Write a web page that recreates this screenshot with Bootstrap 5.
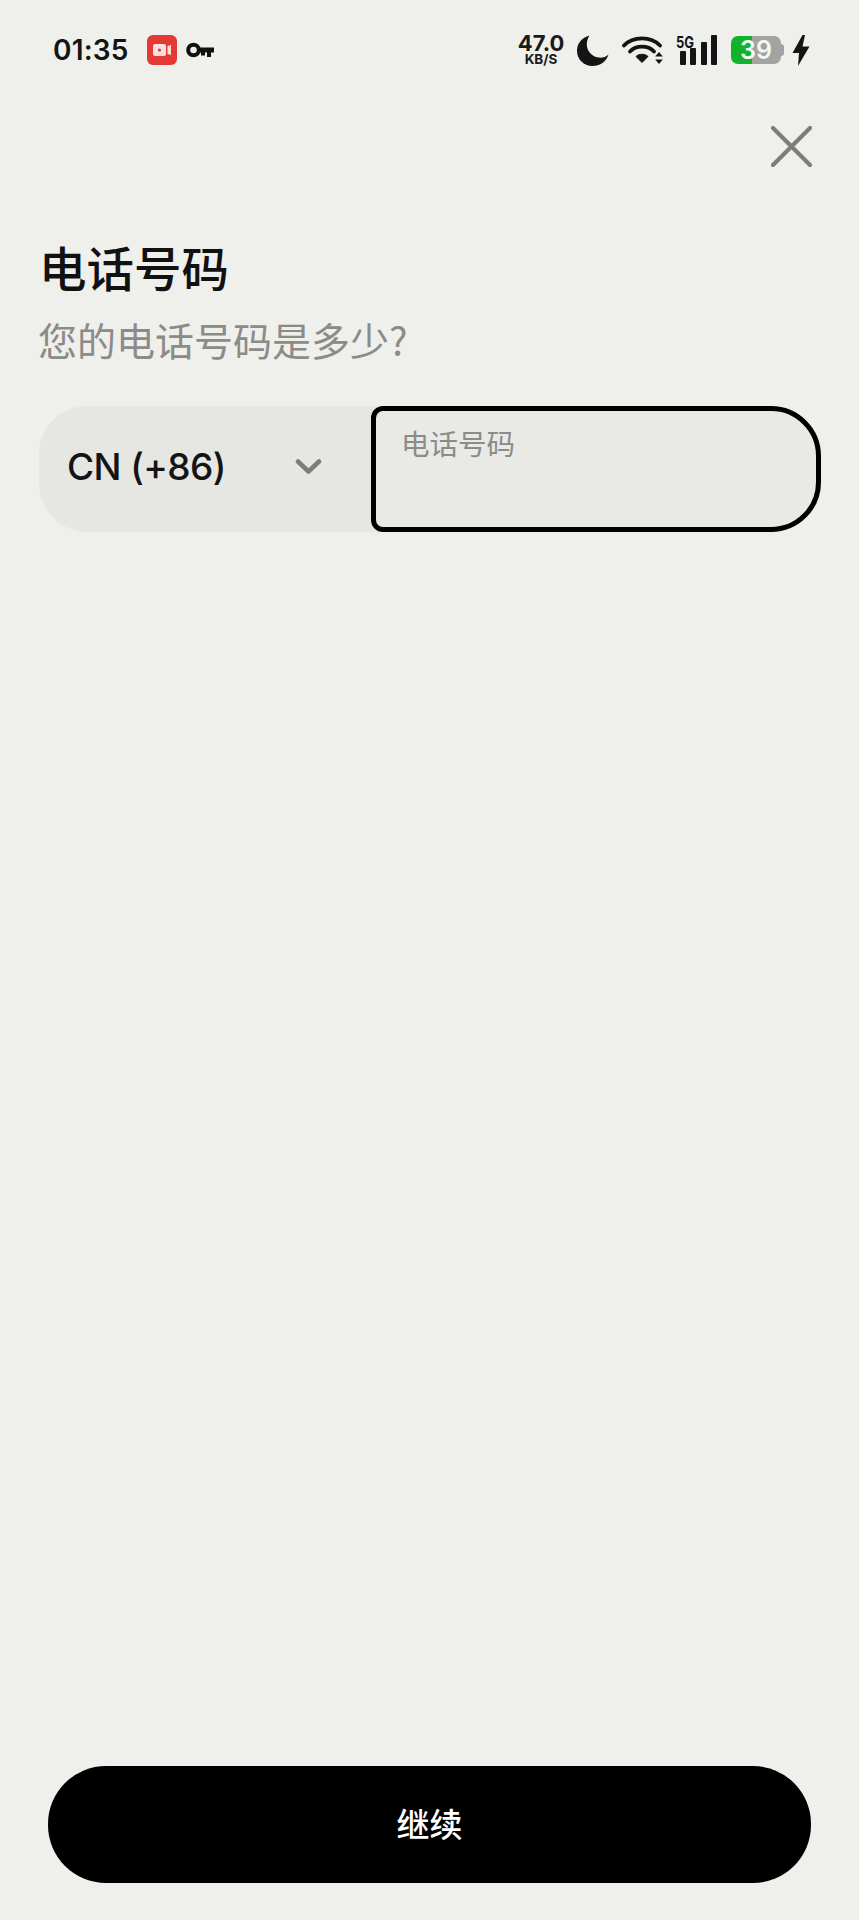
<!DOCTYPE html>
<html lang="zh-CN">
<head>
    <meta charset="UTF-8">
    <title>电话号码</title>
    <link href="https://cdn.jsdelivr.net/npm/bootstrap@5.3.0/dist/css/bootstrap.min.css" rel="stylesheet">
    <style>
        html, body { height: 1920px; }
        body { background: #efefec; color: #141414; font-family: "Noto Sans CJK SC", "Liberation Sans", sans-serif; overflow: hidden; }
        .page-shell { height: 1920px; }

        .status-row { height: 50px; margin-top: 25px; padding: 0 49px 0 53px; }
        .status-time { font: 600 28px/1 Inter, "Liberation Sans", sans-serif; width: 74px; margin-right: 20px; white-space: nowrap; letter-spacing: .2px; }
        .key-icon { margin-left: 9px; }
        .speed-box { width: 54px; margin-right: 9px; font-family: Inter, "Liberation Sans", sans-serif; font-weight: 700; text-align: center; color: #1a1a1a; white-space: nowrap; }
        .speed-top { font-size: 22px; line-height: 18px; }
        .speed-unit { font-size: 13.5px; line-height: 14px; }
        .wifi-icon { margin-left: 13px; }
        .bars-icon { margin: -6px 0 0 12px; }
        .batt-wrap { margin-left: 13px; }
        .batt-body { width: 50px; height: 28px; border-radius: 7px; background: linear-gradient(90deg, #10b32a 0, #10b32a 42%, #a3a3a1 42%); color: #f4f7f2; font: 600 25px/28px Inter, "Liberation Sans", sans-serif; text-align: center; }
        .batt-tip { width: 3px; height: 12px; background: #a3a3a1; border-radius: 0 3px 3px 0; }

        .close-row { padding-right: 47px; margin-top: 51px; }
        .title-text { font-size: 47.5px; font-weight: 500; line-height: 56px; margin: 72px 0 0 39px; color: #111; }
        .sub-text { font-size: 39px; font-weight: 400; line-height: 50px; margin: 19px 0 0 38px; color: #8b8b88; }

        .phone-row { margin: 42px 38px 0 39px; height: 126px; }
        .code-picker { width: 340px; background: #e6e6e3; border-radius: 48px 0 0 48px; padding: 0 57px 5px 28px; font: 500 37px/1 Inter, "Liberation Sans", sans-serif; letter-spacing: -.6px; color: #141414; }
        .phone-field { margin-left: -8px; }
        .phone-field .phone-input { height: 126px; min-height: 126px; background: #e9e9e6; border: 5px solid #000; border-radius: 12px 50px 50px 12px; box-shadow: none; }
        .phone-field label { padding: 19px 0 0 29px; color: #8b8b88; font-size: 28.5px; line-height: 34px; font-weight: 400; }

        .next-wrap { padding: 0 48px 37px 48px; }
        .next-btn { height: 117px; padding: 0 0 3px; background: #000; color: #fff; border: 0; border-radius: 58px; font-size: 33px; line-height: 1; font-weight: 500; }
        .next-btn:hover { background: #000; color: #fff; }
    </style>
</head>
<body>
    <div class="page-shell d-flex flex-column">
        <!-- Status bar -->
        <div class="status-row d-flex align-items-center flex-shrink-0">
            <span class="status-time">01:35</span>
            <svg width="30" height="30" viewBox="0 0 30 30" class="flex-shrink-0">
                <rect width="30" height="30" rx="6" fill="#e53935"/>
                <rect x="6" y="9" width="13" height="12" rx="2" fill="#f9dfdd"/>
                <circle cx="12.5" cy="15" r="1.6" fill="#c93a3a"/>
                <path d="M20.5 11l3.5-1v10l-3.5-1z" fill="#f9dfdd"/>
            </svg>
            <svg width="28" height="16" viewBox="0 0 28 16" class="key-icon flex-shrink-0">
                <circle cx="7.5" cy="8" r="5.3" fill="none" stroke="#111" stroke-width="4"/>
                <path d="M12 5.5h16v5h-3v4.500h-4v-4.500h-2v3h-4v-3h-3z" fill="#111"/>
            </svg>
            <div class="ms-auto d-flex align-items-center">
                <div class="speed-box">
                    <div class="speed-top">47.0</div>
                    <div class="speed-unit">KB/S</div>
                </div>
                <svg width="32" height="31" viewBox="0 0 32 31" class="flex-shrink-0">
                    <path d="M12.500 0.500C4.800 2.500 0 8.500 0 15.800 0 24.500 6.800 31 15.400 31 23 31 29.500 26.500 31.500 19.500 28.500 22.200 25 23 21.500 22.500 14.500 21.500 9.800 15.800 9.800 9.500 9.800 6.200 10.800 3.200 12.500 0.500z" fill="#141414"/>
                </svg>
                <svg width="42" height="30" viewBox="0 0 42 30" class="wifi-icon flex-shrink-0">
                    <g fill="none" stroke="#141414" stroke-width="3.800" stroke-linecap="round">
                        <path d="M2 10.500C11 1 29 1 38 10.500"/>
                        <path d="M8 16.500C14 10 26 10 32 16.500"/>
                    </g>
                    <path d="M14 21.500C17 18.500 23 18.500 26 21.500L20 27.500z" fill="#141414" stroke="#141414" stroke-linejoin="round"/>
                    <path d="M37 17l3.800 4.500h-7.600zM37 29l3.800-4.500h-7.600z" fill="#141414"/>
                </svg>
                <svg width="42" height="36" viewBox="0 -6 42 36" class="bars-icon flex-shrink-0">
                    <text x="0" y="13" font-family="Inter, Liberation Sans, sans-serif" font-size="16" font-weight="700" fill="#141414" textLength="18" lengthAdjust="spacingAndGlyphs">5G</text>
                    <rect x="4" y="16" width="6" height="14" rx="1" fill="#141414"/>
                    <rect x="14" y="13" width="6" height="17" rx="1" fill="#141414"/>
                    <rect x="25" y="7" width="6" height="23" rx="1" fill="#141414"/>
                    <rect x="35" y="0" width="6" height="30" rx="1" fill="#141414"/>
                </svg>
                <div class="batt-wrap d-flex align-items-center flex-shrink-0">
                    <div class="batt-body">39</div>
                    <div class="batt-tip"></div>
                </div>
                <svg width="18" height="31" viewBox="0 0 18 31" class="ms-2 flex-shrink-0">
                    <path d="M10.500 0L0.500 18H7L6 31 17.500 11.500H10.500L13 0z" fill="#141414"/>
                </svg>
            </div>
        </div>

        <!-- Close -->
        <div class="close-row d-flex justify-content-end flex-shrink-0">
            <svg width="41" height="41" viewBox="0 0 41 41">
                <path d="M2 2L39 39M39 2L2 39" stroke="#7d7d7a" stroke-width="4.200" stroke-linecap="round"/>
            </svg>
        </div>

        <h1 class="title-text">电话号码</h1>
        <p class="sub-text mb-0">您的电话号码是多少?</p>

        <!-- Phone input -->
        <div class="phone-row d-flex flex-shrink-0">
            <div class="code-picker d-flex align-items-center justify-content-between flex-shrink-0">
                <span>CN (+86)</span>
                <svg width="27" height="17" viewBox="0 0 27 17">
                    <path d="M3 3.500L13.500 13.500 24 3.500" fill="none" stroke="#7d7d7a" stroke-width="4.500" stroke-linecap="round" stroke-linejoin="round"/>
                </svg>
            </div>
            <div class="form-floating phone-field flex-grow-1">
                <input type="tel" class="form-control phone-input" id="phoneNumber" placeholder=" ">
                <label for="phoneNumber">电话号码</label>
            </div>
        </div>

        <!-- Continue -->
        <div class="next-wrap mt-auto">
            <button type="button" class="btn next-btn w-100">继续</button>
        </div>
    </div>

    <script src="https://cdn.jsdelivr.net/npm/bootstrap@5.3.0/dist/js/bootstrap.bundle.min.js"></script>
</body>
</html>
